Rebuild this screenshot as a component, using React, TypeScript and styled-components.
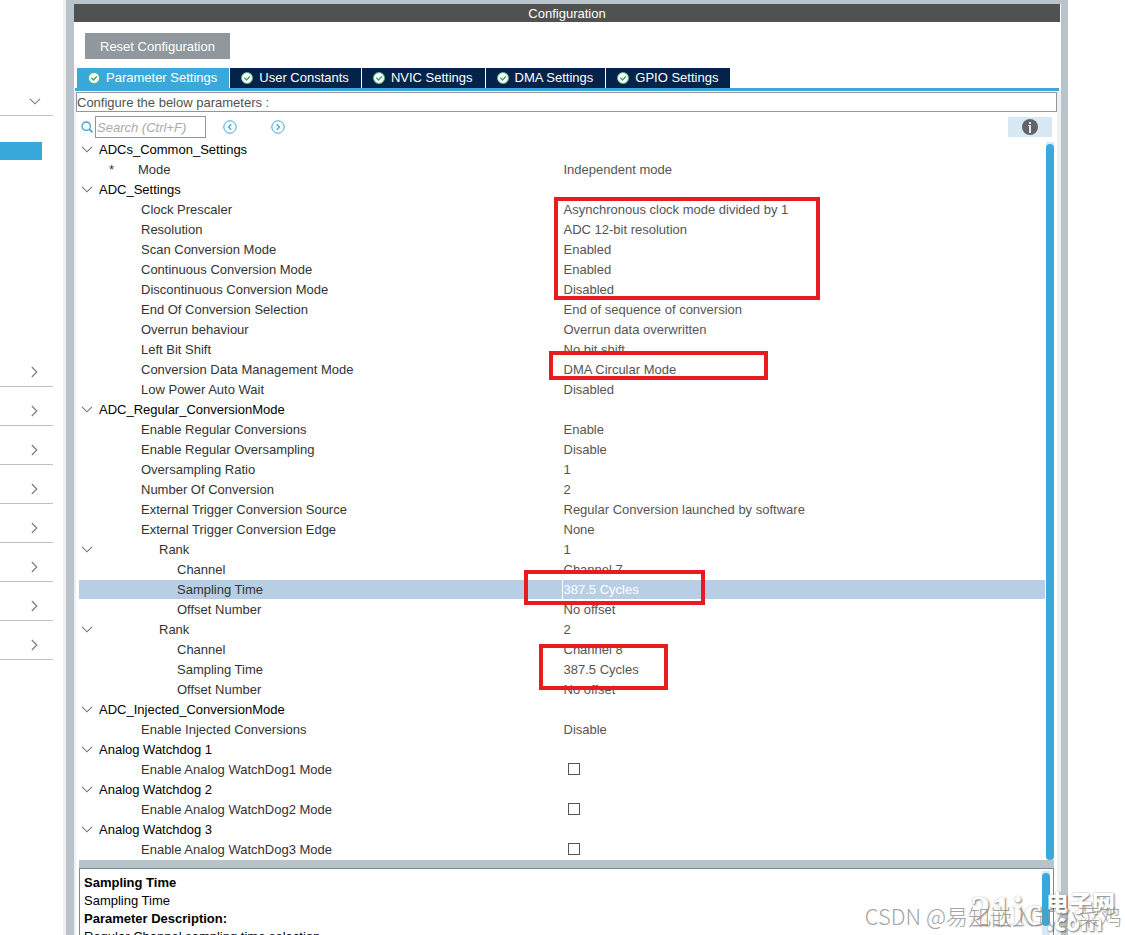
import React, { useState } from "react";
import styled, { createGlobalStyle, css } from "styled-components";

const Global = createGlobalStyle`
  * { box-sizing: border-box; }
  body { margin: 0; background: #fff; }
  body, button, input { font-family: "Liberation Sans", Arial, "Noto Sans CJK SC", sans-serif; font-size: 13px; }
  button { border: 0; margin: 0; padding: 0; background: none; color: inherit; cursor: pointer; }
`;

const Page = styled.div`
  position: relative;
  display: flex;
  height: 100vh;
  min-width: 820px;
  overflow: hidden;
`;

const Sidebar = styled.nav`
  flex: none;
  width: 66px;
  padding-right: 10px;
  border-right: 3px solid #f0f0f0;
`;

const Category = styled.button<{ $open?: boolean }>`
  display: flex;
  align-items: flex-end;
  justify-content: flex-end;
  width: 53px;
  height: ${(p) => (p.$open ? 116 : 39)}px;
  padding: ${(p) => (p.$open ? "0 12px 10px 0" : "0 15px 8px 0")};
  border-bottom: 1px solid #b8c3ca;
`;

const CategoryItems = styled.div`
  height: 232px;
  padding-top: 26px;
`;

const ActiveItem = styled.div`
  width: 42px;
  height: 18px;
  background: #39a9dc;
`;

const Panel = styled.main`
  flex: 1;
  min-width: 0;
  display: flex;
  flex-direction: column;
  border: solid #b8c3ca;
  border-width: 4px 7px 0 8px;
`;

const Title = styled.h1`
  flex: none;
  margin: 0 1px 0 0;
  height: 18px;
  line-height: 19px;
  text-align: center;
  font-size: 13px;
  font-weight: 400;
  color: #fff;
  background: #50524f;
`;

const Actions = styled.div`
  flex: none;
  padding: 11px 11px 9px;
`;

const ResetButton = styled.button`
  display: block;
  height: 26px;
  padding: 1px 15px 0;
  color: #fff;
  background: #90979d;
`;

const Tabs = styled.div`
  flex: none;
  display: flex;
  gap: 1px;
  margin: 0 2px 0 1px;
  padding-left: 2px;
  border-bottom: 3px solid #39a9dc;
`;

const Tab = styled.button<{ $active: boolean }>`
  display: flex;
  align-items: center;
  gap: 6px;
  height: 20px;
  padding: 0 12px 1px 11px;
  color: #fff;
  white-space: nowrap;
  background: ${(p) => (p.$active ? "#39a9dc" : "#03234b")};
`;

const Body = styled.section`
  flex: 1;
  min-height: 0;
  display: flex;
  flex-direction: column;
  padding-top: 1px;
  border: solid #f0f0f0;
  border-width: 0 4px 0 2px;
`;

const Hint = styled.p`
  flex: none;
  margin: 0;
  height: 20px;
  line-height: 19px;
  border: 1px solid #90979d;
  color: #50524f;
`;

const SearchBar = styled.div`
  flex: none;
  display: flex;
  align-items: center;
  height: 28px;
  padding: 2px 5px 0;
`;

const SearchLabel = styled.label`
  display: flex;
  align-items: center;
  gap: 2px;
  margin-right: 17px;
`;

const SearchInput = styled.input`
  width: 111px;
  height: 22px;
  padding: 0 1px;
  border: 1px solid #90979d;
  border-radius: 0;
  outline: 0;
  font-style: italic;
  &::placeholder { color: #aaa; opacity: 1; }
`;

const NavButton = styled.button`
  display: flex;
  margin-right: 34px;
`;

const InfoButton = styled.button`
  display: flex;
  align-items: center;
  justify-content: center;
  margin-left: auto;
  width: 44px;
  height: 20px;
  background: #d9e8f5;
`;

const TreeArea = styled.div`
  flex: none;
  display: flex;
  gap: 1px;
  padding: 0 3px;
`;

const TreeBox = styled.div`
  position: relative;
  flex: 1;
  min-width: 0;
`;

const Table = styled.table`
  width: 100%;
  table-layout: fixed;
  border-collapse: collapse;
`;

const Row = styled.tr<{ $selected?: boolean }>`
  height: 20px;
  ${(p) =>
    p.$selected &&
    css`
      background: linear-gradient(#b8cee4 19px, #fff 19px);
      td { color: #fff; border-color: #fff; }
    `}
`;

const indents = { section: 20, star: 30, item: 62, rank: 80, sub: 98 };
type Kind = keyof typeof indents;

const NameCell = styled.th<{ $kind: Kind }>`
  position: relative;
  width: 50%;
  padding: 0 0 0 ${(p) => indents[p.$kind]}px;
  text-align: left;
  font-weight: 400;
  line-height: 20px;
  white-space: nowrap;
  color: ${(p) => (p.$kind === "section" ? "#000" : "#333")};
`;

const ValueCell = styled.td`
  padding: 0 0 0 1px;
  border-left: 1px solid transparent;
  line-height: 20px;
  white-space: nowrap;
  color: #555;
`;

const Toggle = styled.button`
  position: absolute;
  left: 2px;
  top: 6px;
  display: flex;
`;

const Star = styled.span`
  display: inline-block;
  width: 29px;
`;

const CheckBox = styled.input`
  appearance: none;
  display: block;
  width: 12px;
  height: 12px;
  margin: 0 0 2px 4px;
  border: 1px solid #555;
  background: #fff;
  &:checked { background: #39a9dc; }
`;

const Highlight = styled.div<{ $x: number; $y: number; $w: number; $h: number }>`
  position: absolute;
  left: calc(50% + ${(p) => p.$x}px);
  top: ${(p) => p.$y}px;
  width: ${(p) => p.$w}px;
  height: ${(p) => p.$h}px;
  border: 4px solid #e81c1e;
  pointer-events: none;
`;

const Track = styled.div`
  flex: none;
  display: flex;
  flex-direction: column;
  width: 8px;
  margin-top: 2px;
  padding-top: 2px;
  background: #d9e8f5;
`;

const Thumb = styled.div<{ $height?: number }>`
  ${(p) => (p.$height ? `height: ${p.$height}px;` : "flex: 1;")}
  border-radius: 4px;
  background: #39a9dc;
`;

const Splitter = styled.div`
  flex: none;
  height: 8px;
  margin: 0 3px;
  background: #b8c3ca;
`;

const Description = styled.div`
  flex: 1;
  min-height: 64px;
  display: flex;
  justify-content: space-between;
  margin: 0 3px;
  padding: 0 3px;
  overflow: hidden;
  border: solid #7a8a99;
  border-width: 1px 1px 0;
`;

const DescriptionText = styled.dl`
  margin: 0;
  padding: 5px 0 0 1px;
  line-height: 18px;
  white-space: nowrap;
  color: #000;
  dt { font-weight: 700; }
  dd { margin: 0; }
`;

const RightPane = styled.aside`
  flex: none;
  width: 57px;
`;

const Author = styled.div`
  position: absolute;
  right: 3px;
  bottom: 5px;
  font-family: "Noto Sans CJK SC", sans-serif;
  font-size: 22px;
  font-weight: 300;
  line-height: 30px;
  white-space: nowrap;
  color: rgba(140, 140, 140, 0.8);
`;

const Site = styled.div`
  position: absolute;
  right: 10px;
  bottom: 4px;
  display: flex;
  align-items: flex-end;
  gap: 4px;
  color: #fff;
  font-weight: 900;
  text-shadow: 1px 1px 2px rgba(0, 0, 0, 0.5), 0 0 1px rgba(0, 0, 0, 0.3);
`;

const SiteName = styled.span`
  font-family: "Liberation Serif", serif;
  font-size: 42px;
  line-height: 40px;
`;

const SiteSide = styled.span`
  display: flex;
  flex-direction: column;
  font-family: "Noto Sans CJK SC", sans-serif;
  font-size: 23px;
  line-height: 20px;
`;

const Down = () => (
  <svg width="12" height="7" viewBox="0 0 12 7" fill="none" stroke="#777" strokeWidth="1.1">
    <path d="M1 .8 6 5.8 11 .8" />
  </svg>
);

const Right = () => (
  <svg width="7" height="12" viewBox="0 0 7 12" fill="none" stroke="#777" strokeWidth="1.1">
    <path d="M.8 1 5.8 6 .8 11" />
  </svg>
);

const Check = () => (
  <svg width="12" height="12" viewBox="0 0 12 12">
    <circle cx="6" cy="6" r="5.5" fill="#fff" stroke="#52b07a" />
    <path d="M3.2 5.6 5.4 8 8.9 4.4" fill="none" stroke="#3d9f6a" strokeWidth="1.4" />
  </svg>
);

const SearchIcon = () => (
  <svg width="12" height="12" viewBox="0 0 12 12" fill="none" stroke="#39a9dc" strokeWidth="1.3">
    <circle cx="5.2" cy="5.2" r="4.2" />
    <path d="m8.2 8.2 3.2 3.2" strokeWidth="1.8" />
  </svg>
);

const Circled = ({ d }: { d: string }) => (
  <svg width="14" height="14" viewBox="0 0 14 14" fill="none" stroke="#39a9dc">
    <circle cx="7" cy="7" r="6.2" />
    <path d={d} strokeWidth="1.3" />
  </svg>
);

const Info = () => (
  <svg width="16" height="16" viewBox="0 0 16 16">
    <circle cx="8" cy="8" r="8" fill="#646464" />
    <path d="M7 3h2v2H7zM6 6h3v8H7V7H6z" fill="#d9e8f5" />
  </svg>
);

interface Entry {
  kind: Kind;
  name: string;
  value?: string;
  check?: boolean;
  selected?: boolean;
}

const entry = (kind: Kind, name: string, value?: string): Entry => ({ kind, name, value });
const check = (name: string): Entry => ({ kind: "item", name, check: true });

const entries: Entry[] = [
  entry("section", "ADCs_Common_Settings"),
  entry("star", "Mode", "Independent mode"),
  entry("section", "ADC_Settings"),
  entry("item", "Clock Prescaler", "Asynchronous clock mode divided by 1"),
  entry("item", "Resolution", "ADC 12-bit resolution"),
  entry("item", "Scan Conversion Mode", "Enabled"),
  entry("item", "Continuous Conversion Mode", "Enabled"),
  entry("item", "Discontinuous Conversion Mode", "Disabled"),
  entry("item", "End Of Conversion Selection", "End of sequence of conversion"),
  entry("item", "Overrun behaviour", "Overrun data overwritten"),
  entry("item", "Left Bit Shift", "No bit shift"),
  entry("item", "Conversion Data Management Mode", "DMA Circular Mode"),
  entry("item", "Low Power Auto Wait", "Disabled"),
  entry("section", "ADC_Regular_ConversionMode"),
  entry("item", "Enable Regular Conversions", "Enable"),
  entry("item", "Enable Regular Oversampling", "Disable"),
  entry("item", "Oversampling Ratio", "1"),
  entry("item", "Number Of Conversion", "2"),
  entry("item", "External Trigger Conversion Source", "Regular Conversion launched by software"),
  entry("item", "External Trigger Conversion Edge", "None"),
  entry("rank", "Rank", "1"),
  entry("sub", "Channel", "Channel 7"),
  { kind: "sub", name: "Sampling Time", value: "387.5 Cycles", selected: true },
  entry("sub", "Offset Number", "No offset"),
  entry("rank", "Rank", "2"),
  entry("sub", "Channel", "Channel 8"),
  entry("sub", "Sampling Time", "387.5 Cycles"),
  entry("sub", "Offset Number", "No offset"),
  entry("section", "ADC_Injected_ConversionMode"),
  entry("item", "Enable Injected Conversions", "Disable"),
  entry("section", "Analog Watchdog 1"),
  check("Enable Analog WatchDog1 Mode"),
  entry("section", "Analog Watchdog 2"),
  check("Enable Analog WatchDog2 Mode"),
  entry("section", "Analog Watchdog 3"),
  check("Enable Analog WatchDog3 Mode"),
];

const tabs = ["Parameter Settings", "User Constants", "NVIC Settings", "DMA Settings", "GPIO Settings"];

export default function App() {
  const [active, setActive] = useState(0);
  return (
    <Page>
      <Global />
      <Sidebar aria-label="Categories">
        <Category $open aria-label="Collapse category"><Down /></Category>
        <CategoryItems><ActiveItem /></CategoryItems>
        {Array.from({ length: 8 }, (_, i) => (
          <Category key={i} aria-label={`Expand category ${i + 1}`}><Right /></Category>
        ))}
      </Sidebar>
      <Panel>
        <Title>Configuration</Title>
        <Actions><ResetButton>Reset Configuration</ResetButton></Actions>
        <Tabs role="tablist">
          {tabs.map((t, i) => (
            <Tab key={t} role="tab" aria-selected={i === active} $active={i === active} onClick={() => setActive(i)}>
              <Check />{t}
            </Tab>
          ))}
        </Tabs>
        <Body>
          <Hint>Configure the below parameters :</Hint>
          <SearchBar>
            <SearchLabel>
              <SearchIcon />
              <SearchInput type="text" aria-label="Search" placeholder="Search (Ctrl+F)" />
            </SearchLabel>
            <NavButton aria-label="Previous"><Circled d="M8.3 4.2 5.5 7l2.8 2.8" /></NavButton>
            <NavButton aria-label="Next"><Circled d="M5.7 4.2 8.5 7 5.7 9.8" /></NavButton>
            <InfoButton aria-label="Information"><Info /></InfoButton>
          </SearchBar>
          <TreeArea>
            <TreeBox>
              <Table>
                <tbody>
                  {entries.map((e, i) => (
                    <Row key={i} $selected={e.selected}>
                      <NameCell scope="row" $kind={e.kind}>
                        {(e.kind === "section" || e.kind === "rank") && (
                          <Toggle aria-label={`Collapse ${e.name}`}><Down /></Toggle>
                        )}
                        {e.kind === "star" && <Star>*</Star>}
                        {e.check ? <label htmlFor={`opt${i}`}>{e.name}</label> : e.name}
                      </NameCell>
                      <ValueCell>{e.check ? <CheckBox id={`opt${i}`} type="checkbox" /> : e.value}</ValueCell>
                    </Row>
                  ))}
                </tbody>
              </Table>
              <Highlight $x={-8} $y={57} $w={266} $h={103} />
              <Highlight $x={-13} $y={211} $w={219} $h={29} />
              <Highlight $x={-38} $y={430} $w={181} $h={35} />
              <Highlight $x={-23} $y={504} $w={129} $h={46} />
            </TreeBox>
            <Track><Thumb /></Track>
          </TreeArea>
          <Splitter />
          <Description>
            <DescriptionText>
              <dt>Sampling Time</dt>
              <dd>Sampling Time</dd>
              <dt>Parameter Description:</dt>
              <dd>Regular Channel sampling time selection</dd>
            </DescriptionText>
            <Track><Thumb $height={53} /></Track>
          </Description>
        </Body>
      </Panel>
      <RightPane />
      <Site><SiteName>21ic</SiteName><SiteSide><span>电子网</span><span>.com</span></SiteSide></Site>
      <Author>CSDN @易知嵌入式小菜鸡</Author>
    </Page>
  );
}
